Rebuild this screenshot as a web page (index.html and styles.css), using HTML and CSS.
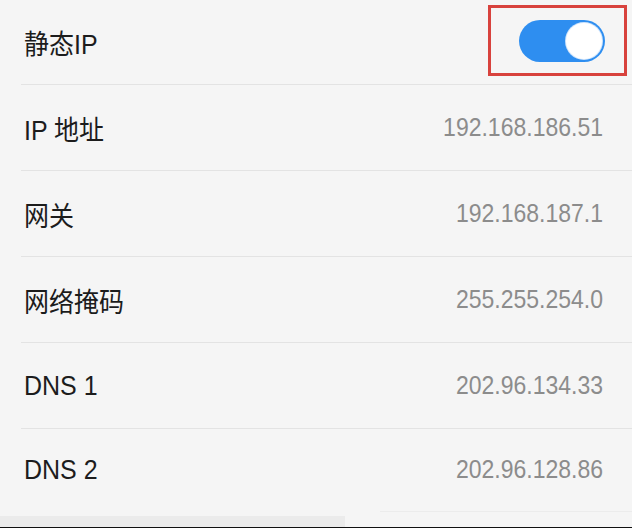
FILE: index.html
```html
<!DOCTYPE html>
<html lang="zh-CN">
<head>
    <meta charset="UTF-8">
    <meta name="viewport" content="width=device-width, initial-scale=1.0">
    <title>静态IP</title>
    <link rel="stylesheet" href="styles.css">
</head>
<body>
    <div class="list">
        <div class="row row-first">
            <span class="label">静态IP</span>
            <div class="mark">
                <div class="switch on">
                    <span class="knob"></span>
                </div>
            </div>
        </div>
        <div class="row">
            <span class="label">IP 地址</span>
            <span class="value">192.168.186.51</span>
        </div>
        <div class="row">
            <span class="label">网关</span>
            <span class="value">192.168.187.1</span>
        </div>
        <div class="row">
            <span class="label">网络掩码</span>
            <span class="value">255.255.254.0</span>
        </div>
        <div class="row">
            <span class="label">DNS 1</span>
            <span class="value">202.96.134.33</span>
        </div>
        <div class="row row-last">
            <span class="label">DNS 2</span>
            <span class="value">202.96.128.86</span>
        </div>
    </div>
    <div class="footer">
        <div class="footer-band"></div>
        <div class="footer-line"></div>
    </div>
</body>
</html>
```

FILE: styles.css
```css
body {
    font-family: 'Liberation Sans', 'Noto Sans CJK SC', sans-serif;
    margin: 0;
    padding: 0;
    background-color: #f5f5f5;
    height: 528px;
    overflow: hidden;
    display: flex;
    flex-direction: column;
}
.list {
    display: flex;
    flex-direction: column;
}
.row {
    display: flex;
    justify-content: space-between;
    align-items: center;
    height: 85px;
    margin-left: 21px;
    padding: 0 29px 0 3px;
    border-bottom: 1px solid #e3e3e3;
}
.row-first {
    height: 84px;
}
.row-last {
    height: 81px;
    border-bottom-color: transparent;
}
/* the shot is a little taller than wide, so the text is too */
.label {
    display: inline-block;
    font-size: 25px;
    color: #1c1c1c;
    transform: scaleY(1.1);
}
.value {
    display: inline-block;
    font-size: 23px;
    color: #8c8c8c;
    transform: scaleY(1.1);
}
/* red annotation box round the switch */
.mark {
    display: flex;
    padding: 12px 19px 11px 28px;
    border: 3px solid #d8423d;
    margin: -3px -24px 0 0;
}
.switch {
    width: 86px;
    height: 42px;
    border-radius: 21px;
    background: #2e8ef0;
    display: flex;
    align-items: center;
    justify-content: flex-end;
    padding: 0 3px;
    box-sizing: border-box;
}
.knob {
    width: 36px;
    height: 36px;
    border-radius: 50%;
    background: #fff;
    box-shadow: 0 0 0 1px #cfe4fb;
}
.footer {
    position: relative;
    flex: 1;
    border-top: 1px solid #ececec;
    margin-left: 380px;
}
.footer-band {
    position: absolute;
    left: -380px;
    bottom: 1px;
    width: 345px;
    height: 11px;
    background: #ebebeb;
}
.footer-line {
    position: absolute;
    left: -380px;
    right: 0;
    bottom: 0;
    height: 1px;
    background: #111;
}
```
